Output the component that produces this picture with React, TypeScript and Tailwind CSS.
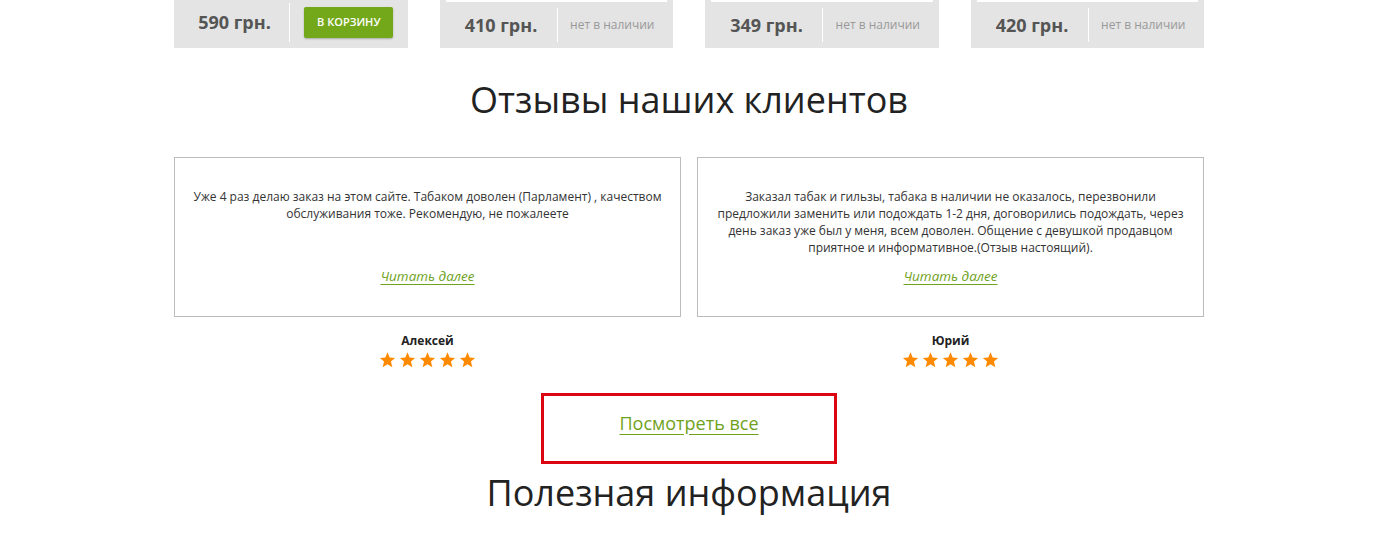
import React from "react";

const products = [
  { price: "590 грн.", inStock: true },
  { price: "410 грн.", inStock: false },
  { price: "349 грн.", inStock: false },
  { price: "420 грн.", inStock: false },
];

const reviews = [
  {
    text: "Уже 4 раз делаю заказ на этом сайте. Табаком доволен (Парламент) , качеством обслуживания тоже. Рекомендую, не пожалеете",
    name: "Алексей",
  },
  {
    text: "Заказал табак и гильзы, табака в наличии не оказалось, перезвонили предложили заменить или подождать 1-2 дня, договорились подождать, через день заказ уже был у меня, всем доволен. Общение с девушкой продавцом приятное и информативное.(Отзыв настоящий).",
    name: "Юрий",
  },
];

function Star() {
  return (
    <svg width="17" height="16" viewBox="0 0 24 23" className="block">
      <polygon
        points="12,0.5 15.1,8 23,8.6 17,13.8 18.9,21.8 12,17.5 5.1,21.8 7,13.8 1,8.6 8.9,8"
        fill="#ff8a00"
      />
    </svg>
  );
}

function ProductBar({ price, inStock }: { price: string; inStock: boolean }) {
  if (inStock) {
    return (
      <div className="flex h-[48px] bg-[#e4e4e4]">
        <div className="flex w-[115px] items-center justify-center pb-[4px] pl-[6px] text-[18px] font-bold text-[#555]">
          {price}
        </div>
        <div className="mt-[3px] mb-[6px] w-px bg-white" />
        <div className="flex flex-1 items-center justify-center pb-[4px]">
          <button className="h-[31px] rounded-[2px] bg-[#74a81b] px-[13px] text-[11px] font-semibold text-white shadow-[0_1px_2px_rgba(0,0,0,0.25)]">
            В КОРЗИНУ
          </button>
        </div>
      </div>
    );
  }
  return (
    <div className="h-[48px] bg-[#e4e4e4] px-[6px]">
      <div className="h-[2px] bg-white" />
      <div className="mt-[6px] flex h-[34px]">
        <div className="flex w-[111px] items-center justify-center text-[18px] font-bold text-[#555]">
          {price}
        </div>
        <div className="w-px bg-white" />
        <div className="flex flex-1 items-center justify-center text-[12px] text-[#999]">
          нет в наличии
        </div>
      </div>
    </div>
  );
}

export default function App() {
  return (
    <div
      className="min-h-[538px] bg-white pb-[30px]"
      style={{ fontFamily: '"Open Sans", "Liberation Sans", sans-serif' }}
    >
      <div className="mx-auto w-[1030px]">
        <div className="grid grid-cols-4 gap-[32px]">
          {products.map((p) => (
            <ProductBar key={p.price} price={p.price} inStock={p.inStock} />
          ))}
        </div>

        <h2 className="mt-[30px] text-center text-[36px] leading-[43px] text-[#222]">
          Отзывы наших клиентов
        </h2>

        <div className="mt-[36px] grid grid-cols-2 gap-[16px]">
          {reviews.map((r) => (
            <div key={r.name} className="flex flex-col items-center">
              <div className="flex h-[160px] w-full flex-col items-center border border-[#bcbcbc] px-[16px] pt-[30px]">
                <p className="h-[68px] text-center text-[12px] leading-[17px] text-[#333]">
                  {r.text}
                </p>
                <a
                  href="#"
                  className="mt-[10px] text-[13.5px] leading-[20px] italic text-[#6fa21c] underline decoration-[#6fa21c] underline-offset-[3px]"
                >
                  Читать далее
                </a>
              </div>
              <div className="mt-[16px] text-[12px] leading-[16px] font-bold text-[#222]">
                {r.name}
              </div>
              <div className="mt-[3px] flex gap-[3px]">
                {[0, 1, 2, 3, 4].map((i) => (
                  <Star key={i} />
                ))}
              </div>
            </div>
          ))}
        </div>

        <div className="mt-[25px] flex justify-center">
          <div className="flex h-[71px] w-[296px] items-center justify-center border-[3px] border-[#dc0612] pb-[12px]">
            <a
              href="#"
              className="text-[18px] leading-[24px] text-[#6fa21c] underline decoration-[#6fa21c] underline-offset-[4px]"
            >
              Посмотреть все
            </a>
          </div>
        </div>

        <h2 className="mt-[7px] text-center text-[36px] leading-[43px] text-[#222]">
          Полезная информация
        </h2>
      </div>
    </div>
  );
}
